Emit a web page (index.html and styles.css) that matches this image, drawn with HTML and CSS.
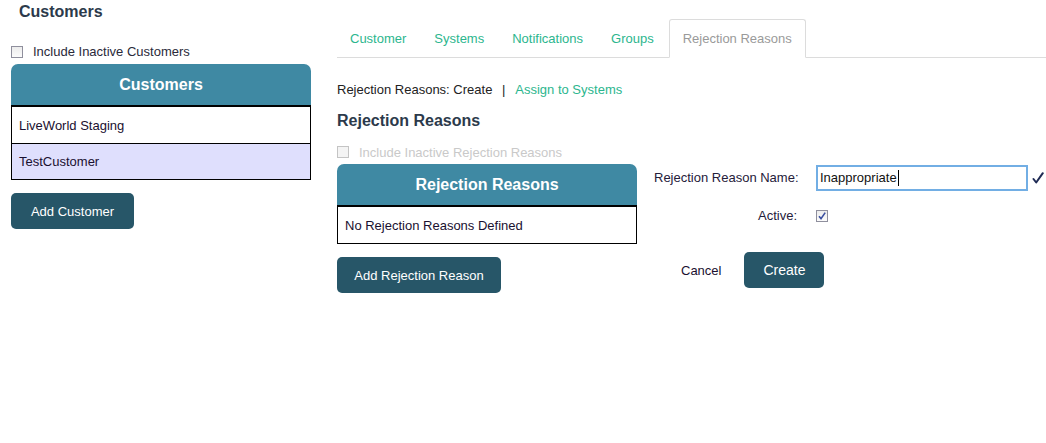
FILE: index.html
```html
<!DOCTYPE html>
<html>
<head>
<meta charset="utf-8">
<link rel="stylesheet" href="styles.css">
</head>
<body>
<div class="page">
  <div class="left">
    <h1 class="title">Customers</h1>
    <label class="check-row"><span class="cb"></span><span>Include Inactive Customers</span></label>
    <div class="panel">
      <div class="panel-head">Customers</div>
      <div class="panel-body">
        <div class="row">LiveWorld Staging</div>
        <div class="row selected">TestCustomer</div>
      </div>
    </div>
    <button class="btn btn-add-customer">Add Customer</button>
  </div>
  <div class="right">
    <ul class="tabs">
      <li class="tab">Customer</li>
      <li class="tab">Systems</li>
      <li class="tab">Notifications</li>
      <li class="tab">Groups</li>
      <li class="tab active">Rejection Reasons</li>
    </ul>
    <div class="crumbs">Rejection Reasons: Create <span class="sep">|</span> <span class="link">Assign to Systems</span></div>
    <h2 class="subtitle">Rejection Reasons</h2>
    <div class="content">
      <div class="list-col">
        <label class="check-row disabled"><span class="cb"></span><span>Include Inactive Rejection Reasons</span></label>
        <div class="panel">
          <div class="panel-head">Rejection Reasons</div>
          <div class="panel-body">
            <div class="row">No Rejection Reasons Defined</div>
          </div>
        </div>
        <button class="btn btn-add-reason">Add Rejection Reason</button>
      </div>
      <div class="form">
        <div class="form-row">
          <span class="lbl">Rejection Reason Name:</span>
          <span class="input">Inappropriate<span class="caret"></span></span>
          <svg class="ok" width="12" height="12" viewBox="0 0 12 12"><path d="M1.5 7 L4.2 10.5 L10.8 1.2" fill="none" stroke="#1f2b55" stroke-width="2" stroke-linecap="round" stroke-linejoin="round"/></svg>
        </div>
        <div class="form-row active-row">
          <span class="lbl">Active:</span>
          <span class="cb checked"><svg width="10" height="10" viewBox="0 0 10 10"><path d="M2 5.2 L4 7.6 L8.2 1.6" fill="none" stroke="#3b4fa0" stroke-width="1.6"/></svg></span>
        </div>
        <div class="actions">
          <span class="cancel">Cancel</span>
          <button class="btn btn-create">Create</button>
        </div>
      </div>
    </div>
  </div>
</div>
</body>
</html>
```
FILE: styles.css
```css
* { box-sizing: border-box; }
body {
  margin: 0;
  font-family: "Liberation Sans", Arial, sans-serif;
  font-size: 13px;
  color: #222;
  background: #fff;
}
.page {
  display: flex;
  align-items: flex-start;
}
.left {
  width: 300px;
  margin-left: 11px;
}
.title {
  margin: 0;
  padding: 3px 0 0 8px;
  font-size: 16px;
  font-weight: bold;
  color: #2c3a4b;
  line-height: 17px;
}
.check-row {
  display: flex;
  align-items: center;
  gap: 10px;
  color: #2a2a3a;
}
.left .check-row { margin-top: 23px; height: 21px; align-items: flex-start; padding-top: 3px; }
.cb {
  width: 12px;
  height: 12px;
  flex: none;
  border: 1px solid #8f8f9d;
  background: linear-gradient(#ececec, #fbfbfb);
  display: inline-flex;
  align-items: center;
  justify-content: center;
}
.left .check-row span:last-child { line-height: 12px; }
.check-row.disabled { color: #c9c9c9; }
.check-row.disabled .cb { border-color: #c4c4c4; background: #f4f4f4; }
.panel-head {
  height: 42px;
  background: #3f89a3;
  border-radius: 7px 7px 0 0;
  color: #fff;
  font-weight: bold;
  font-size: 16px;
  display: flex;
  align-items: center;
  justify-content: center;
  border-bottom: 1px solid #000;
}
.panel-body {
  border: 1px solid #000;
  border-top: 1px solid #000;
}
.row {
  height: 36px;
  display: flex;
  align-items: center;
  padding-left: 7px;
  color: #1a1030;
  background: #fff;
}
.row + .row { border-top: 1px solid #000; }
.row.selected { background: #dfdffd; }
.btn {
  background: #275668;
  color: #fff;
  border: none;
  border-radius: 5px;
  font-family: "Liberation Sans", Arial, sans-serif;
  font-size: 13px;
  height: 36px;
  padding: 0;
}
.btn-add-customer { width: 123px; margin-top: 13px; }
.right {
  margin-left: 26px;
  flex: 1;
}
.tabs {
  list-style: none;
  margin: 19px 0 0 0;
  padding: 0;
  display: flex;
  border-bottom: 1px solid #dcdcdc;
  height: 39px;
}
.tab {
  padding: 0 13px;
  height: 38px;
  display: flex;
  align-items: center;
  color: #2cb68e;
  margin-right: 2px;
}
.tab.active {
  color: #9a9a9a;
  border: 1px solid #dcdcdc;
  border-bottom: 1px solid #fff;
  border-radius: 3px 3px 0 0;
  height: 39px;
  background: #fff;
}
.crumbs {
  margin-top: 24px;
  line-height: 16px;
  color: #222;
}
.sep { margin: 0 7px 0 6px; }
.link { color: #2cb68e; }
.subtitle {
  margin: 13px 0 0;
  font-size: 16px;
  font-weight: bold;
  color: #2c3a4b;
  line-height: 20px;
}
.content {
  display: flex;
  align-items: flex-start;
}
.list-col { width: 300px; }
.list-col .check-row { margin-top: 12px; height: 21px; align-items: flex-start; padding-top: 3px; }
.list-col .check-row span:last-child { line-height: 13px; }
.btn-add-reason { width: 164px; margin-top: 13px; }
.form {
  margin-left: 17px;
  margin-top: 34px;
}
.form-row {
  display: flex;
  align-items: center;
  height: 25px;
}
.lbl {
  width: 143px;
  text-align: right;
  white-space: nowrap;
  color: #25203a;
  margin-right: 19px;
}
.input {
  width: 212px;
  height: 26px;
  flex: none;
  border: 2px solid #72aee4;
  display: flex;
  align-items: center;
  padding-left: 2px;
  color: #111;
}
.caret {
  display: inline-block;
  width: 1px;
  height: 16px;
  background: #000;
  margin-left: 1px;
}
.ok {
  margin-left: 4px;
  flex: none;
}
.active-row { margin-top: 13px; }
.actions {
  display: flex;
  align-items: center;
  margin-top: 24px;
}
.cancel {
  margin-left: 27px;
  color: #1a1030;
}
.btn-create {
  width: 80px;
  margin-left: 23px;
  font-size: 14px;
}
```
